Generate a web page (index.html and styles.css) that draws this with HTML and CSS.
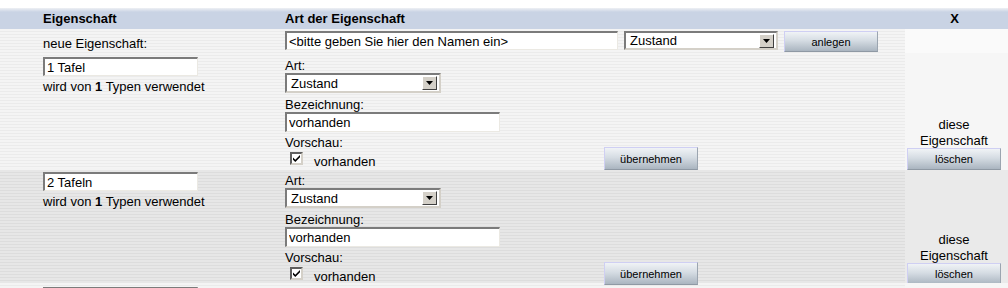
FILE: index.html
```html
<!DOCTYPE html>
<html lang="de">
<head>
  <meta charset="UTF-8">
  <title>Eigenschaften</title>
  <link rel="stylesheet" href="styles.css">
</head>
<body>
<div class="liste">
  <div class="kopf">
    <div class="sp1">Eigenschaft</div>
    <div class="sp2">Art der Eigenschaft</div>
    <div></div>
    <div class="sp4">X</div>
  </div>

  <div class="neu">
    <div class="sp1 neu-text">neue Eigenschaft:</div>
    <div class="neu-felder">
      <input type="text" class="feld feld-name" value="&lt;bitte geben Sie hier den Namen ein&gt;">
      <div class="auswahl"><span>Zustand</span><span class="pfeil"><svg width="7" height="4" viewBox="0 0 7 4"><path d="M0 0h7L3.5 4z" fill="#000"/></svg></span></div>
      <button class="knopf">anlegen</button>
    </div>
    <div class="sp4"></div>
  </div>

  <div class="eintrag hell">
    <div class="sp1">
      <input type="text" class="feld feld-kurz" value="1 Tafel">
      <div class="info">wird von <b>1</b> Typen verwendet</div>
    </div>
    <div class="sp2">
      <div class="lbl">Art:</div>
      <div class="auswahl klein"><span>Zustand</span><span class="pfeil"><svg width="7" height="4" viewBox="0 0 7 4"><path d="M0 0h7L3.5 4z" fill="#000"/></svg></span></div>
      <div class="lbl abstand">Bezeichnung:</div>
      <input type="text" class="feld feld-bez" value="vorhanden">
      <div class="lbl abstand-k">Vorschau:</div>
      <div class="vorschau">
        <span class="haken"><svg width="7" height="7" viewBox="0 0 7 7"><path d="M0 2.5l2.3 2.3L7 0v2.3L2.3 7 0 4.8z" fill="#000"/></svg></span>
        <span class="vorschau-text">vorhanden</span>
      </div>
    </div>
    <div class="sp3"><button class="knopf">übernehmen</button></div>
    <div class="sp4 loeschen">
      <div class="hinweis">diese<br>Eigenschaft</div>
      <button class="knopf">löschen</button>
    </div>
  </div>

  <div class="eintrag dunkel">
    <div class="sp1">
      <input type="text" class="feld feld-kurz" value="2 Tafeln">
      <div class="info">wird von <b>1</b> Typen verwendet</div>
    </div>
    <div class="sp2">
      <div class="lbl">Art:</div>
      <div class="auswahl klein"><span>Zustand</span><span class="pfeil"><svg width="7" height="4" viewBox="0 0 7 4"><path d="M0 0h7L3.5 4z" fill="#000"/></svg></span></div>
      <div class="lbl abstand">Bezeichnung:</div>
      <input type="text" class="feld feld-bez" value="vorhanden">
      <div class="lbl abstand-k">Vorschau:</div>
      <div class="vorschau">
        <span class="haken"><svg width="7" height="7" viewBox="0 0 7 7"><path d="M0 2.5l2.3 2.3L7 0v2.3L2.3 7 0 4.8z" fill="#000"/></svg></span>
        <span class="vorschau-text">vorhanden</span>
      </div>
    </div>
    <div class="sp3"><button class="knopf">übernehmen</button></div>
    <div class="sp4 loeschen">
      <div class="hinweis">diese<br>Eigenschaft</div>
      <button class="knopf">löschen</button>
    </div>
  </div>

  <div class="eintrag hell">
    <div class="sp1">
      <input type="text" class="feld feld-kurz" value="">
    </div>
    <div class="sp2"></div>
    <div class="sp3"></div>
    <div class="sp4"></div>
  </div>
</div>
</body>
</html>
```

FILE: styles.css
```css
body {
  margin: 0;
  background: #fff;
  font-family: "Liberation Sans", Arial, sans-serif;
  font-size: 13px;
  color: #000;
  overflow: hidden;
}
.liste {
  padding-top: 8px;
}
.kopf {
  display: grid;
  grid-template-columns: 285px 319px 301px 103px;
  height: 21px;
  line-height: 21px;
  font-weight: bold;
  background: linear-gradient(#eef0f4, #c9d3e4 4px);
}
.sp1 {
  padding-left: 43px;
}
.sp4 {
  text-align: center;
}
.kopf .sp4 {
  padding-right: 4px;
}

/* gestreifter Hintergrund wie im alten Layout */
.neu, .hell {
  background: repeating-linear-gradient(#f4f4f4 0 2px, #ebebeb 2px 3px);
}
.dunkel {
  background: repeating-linear-gradient(#e7e7e7 0 2px, #dddddd 2px 3px);
  border-top: 2px solid #f3f3f3;
}
.hell .sp4 {
  background: #f6f6f6;
}
.dunkel .sp4 {
  background: #eaeaea;
}
.neu .sp4 {
  background: #fafafa;
}
.neu {
  display: grid;
  grid-template-columns: 285px 620px 103px;
  height: 24px;
}
.neu-text {
  line-height: 15px;
  padding-top: 7px;
}
.neu-felder {
  display: flex;
  gap: 6px;
  padding-top: 2px;
}
.neu .knopf {
  height: 21px;
}

.feld {
  box-sizing: border-box;
  height: 19px;
  margin: 0;
  padding: 0 2px;
  font: 13px "Liberation Sans", Arial, sans-serif;
  background: #fff;
  border: 2px solid;
  border-color: #7b7b7b #ebe9e3 #ebe9e3 #7b7b7b;
  border-width: 2px 1px 1px 2px;
  outline: none;
}
.feld-name {
  width: 333px;
}
.feld-kurz {
  width: 155px;
  display: block;
}
.feld-bez {
  width: 215px;
  height: 20px;
  display: block;
}

.auswahl {
  box-sizing: border-box;
  width: 154px;
  height: 19px;
  display: flex;
  align-items: center;
  justify-content: space-between;
  padding: 0 2px 0 4px;
  background: #fff;
  border: 2px solid;
  border-color: #7b7b7b #d4d0c8 #d4d0c8 #7b7b7b;
  line-height: 15px;
}
.auswahl.klein {
  width: 156px;
  height: 20px;
}
.pfeil {
  box-sizing: border-box;
  width: 15px;
  height: 14px;
  display: flex;
  align-items: center;
  justify-content: center;
  background: #d4d0c8;
  border: 1px solid;
  border-color: #fff #404040 #404040 #fff;
}

.knopf {
  box-sizing: border-box;
  width: 94px;
  height: 23px;
  margin: 0;
  padding: 0;
  font: 11px "Liberation Sans", Arial, sans-serif;
  color: #000;
  background: linear-gradient(#f0f3f6, #d5dce3 45%, #aab5c0);
  border: 1px solid;
  border-color: #cfcff3 #9ba5b0 #8f99a4 #cfcff3;
  cursor: pointer;
}

.eintrag {
  display: grid;
  grid-template-columns: 285px 319px 301px 103px;
  height: 115px;
  box-sizing: border-box;
}
.eintrag .sp1 {
  padding-top: 4px;
}
.dunkel .sp1 {
  padding-top: 2px;
}
.info {
  margin-top: 3px;
  line-height: 16px;
}
.eintrag .sp2 {
  padding-top: 5px;
}
.dunkel .sp2 {
  padding-top: 3px;
}
.lbl {
  line-height: 15px;
}
.abstand {
  margin-top: 4px;
}
.abstand-k {
  margin-top: 3px;
}
.vorschau {
  display: flex;
  align-items: flex-start;
  margin-top: 2px;
  padding-left: 5px;
}
.haken {
  box-sizing: border-box;
  width: 13px;
  height: 13px;
  display: flex;
  align-items: center;
  justify-content: center;
  background: #fff;
  border: 2px solid;
  border-color: #5f5f5f #d4d0c8 #d4d0c8 #5f5f5f;
}
.haken svg {
  display: block;
}
.vorschau-text {
  margin-left: 11px;
  padding-top: 2px;
  line-height: 16px;
}
.sp3 {
  display: flex;
  align-items: flex-end;
}
.loeschen {
  display: flex;
  flex-direction: column;
  justify-content: flex-end;
  align-items: flex-start;
  padding-left: 2px;
}
.hinweis {
  width: 94px;
  text-align: center;
  line-height: 16px;
  margin-bottom: -1px;
}
.loeschen .knopf {
  height: 22px;
}
```
